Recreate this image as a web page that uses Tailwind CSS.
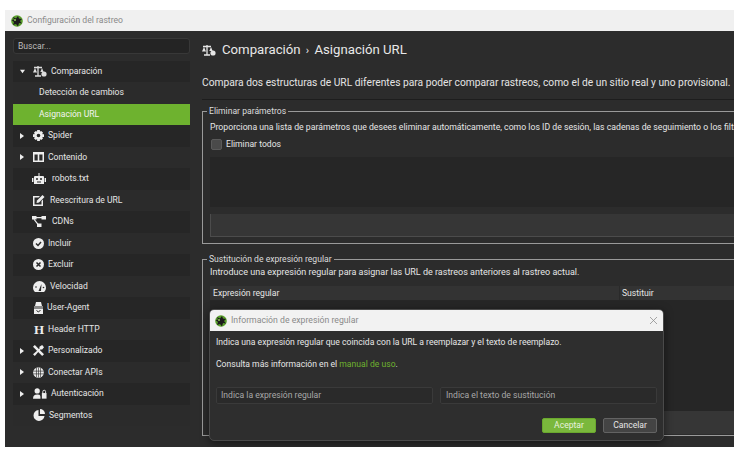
<!DOCTYPE html>
<html lang="es"><head><meta charset="utf-8">
<script src="https://cdn.jsdelivr.net/npm/@tailwindcss/browser@4"></script>
</head>
<body class="bg-white w-[741px] h-[457px] overflow-hidden font-['Roboto',sans-serif] relative">
<div class="absolute left-[5px] top-[10px] w-[729px] h-[437px] bg-[#2c2c2c] overflow-hidden flex flex-col">
  <div class="h-[21px] shrink-0 bg-[#f0f0f0] flex items-center pl-[6px] gap-[4px]">
    <svg width="12" height="12" viewBox="0 0 12 12"><circle cx="6" cy="6" r="5.8" fill="#5aa02c"/><path d="M2 2l3 1.500L7 1l1 2.500 3 .5-2 2 2 2.500-3-.5-1 3.500-2-2.500L2 10l1-3-2.500-2L3 4.500z" fill="#1c1c1c"/><circle cx="4" cy="5" r="1" fill="#8ecb55"/></svg>
    <span class="text-[8.6px] text-[#8a8a8a]">Configuración del rastreo</span>
  </div>
  <div class="flex flex-1 min-h-0">
    <aside class="w-[185px] shrink-0 pl-[8px] pt-[7px]">
      <div class="h-[16px] bg-[#242424] border border-[#383838] rounded-[3px] flex items-center pl-[4px] text-[8.6px] text-[#bdbdbd]">Buscar...</div>
      <ul class="mt-[6.500px] text-[8.6px] text-[#e6e6e6] bg-[#262626]">
        <li class="h-[21.5px] flex items-center bg-[#262626]"><svg class="ml-[7px] w-[5px] h-[5px]" viewBox="0 0 6 6"><path d="M0 1h6L3 5z" fill="#eee"/></svg><svg class="ml-[8px] w-[14px] h-[12px]" viewBox="0 0 14 12" fill="none" stroke="#ddd" stroke-width="1.300"><path d="M5 1v10M2 11h6M1 2.500h8"/><path d="M2 3 0 7.500h4zM9 3 7.300 7h3.400z" fill="#ddd" stroke="none"/><circle cx="11" cy="9" r="2.600" fill="#ddd" stroke="none"/></svg><span class="ml-[4px]">Comparación</span></li>
        <li class="h-[21.5px] flex items-center pl-[26px] bg-[#2b2b2b]">Detección de cambios</li>
        <li class="h-[21.5px] flex items-center pl-[26px] bg-[#6eb22f] text-[#f2f2f2]">Asignación URL</li>
        <li class="h-[21.5px] flex items-center bg-[#262626]"><svg class="ml-[7px] w-[4px] h-[6px]" viewBox="0 0 4 6"><path d="M0 0l4 3-4 3z" fill="#eee"/></svg><svg class="ml-[9px] w-[11px] h-[11px]" viewBox="0 0 12 12"><circle cx="6" cy="6" r="3.400" fill="none" stroke="#eee" stroke-width="2.800"/><path d="M4.500 0h3v2h-3zM4.500 10h3v2h-3zM0 4.500h2v3H0zM10 4.500h2v3h-2zM1 3l2-2 1.500 1.500-2 2zM11 3 9 1 7.500 2.500l2 2zM1 9l2 2 1.500-1.500-2-2zM11 9l-2 2-1.500-1.500 2-2z" fill="#eee"/></svg><span class="ml-[4px]">Spider</span></li>
        <li class="h-[21.5px] flex items-center bg-[#2b2b2b]"><svg class="ml-[7px] w-[4px] h-[6px]" viewBox="0 0 4 6"><path d="M0 0l4 3-4 3z" fill="#eee"/></svg><svg class="ml-[9px] w-[11px] h-[10px]" viewBox="0 0 11 10"><path d="M0 0h11v10H0z" fill="#eee"/><path d="M1.500 2.500h3.200v6H1.500zM6.300 2.500h3.200v6H6.300z" fill="#2b2b2b"/></svg><span class="ml-[4px]">Contenido</span></li>
        <li class="h-[21.5px] flex items-center bg-[#262626]"><svg class="ml-[19px] w-[14px] h-[11px]" viewBox="0 0 14 11"><path d="M3 3h8a1 1 0 011 1v7H2V4a1 1 0 011-1zM6.500 0h1v3h-1zM0 5h1.400v4H0zM12.600 5H14v4h-1.400z" fill="#eee"/><circle cx="5" cy="6" r="1" fill="#262626"/><circle cx="9" cy="6" r="1" fill="#262626"/><path d="M5 8.500h4v1H5z" fill="#262626"/></svg><span class="ml-[6px]">robots.txt</span></li>
        <li class="h-[21.5px] flex items-center bg-[#2b2b2b]"><svg class="ml-[19px] w-[13px] h-[12px]" viewBox="0 0 13 12"><path d="M1 2h7L6.500 3.500H2.500v7h7V7L11 5.500V12H1z" fill="#eee"/><path d="M5 6.500 10.500 1 12.500 3 7 8.500 4.500 9z" fill="#eee"/></svg><span class="ml-[5px]">Reescritura de URL</span></li>
        <li class="h-[21.5px] flex items-center bg-[#262626]"><svg class="ml-[19px] w-[14px] h-[11px]" viewBox="0 0 14 11" fill="#eee"><path d="M0 0h4.500v3.500H0zM9.500 0H14v3.500H9.500zM5 7.500h4.500V11H5z"/><path d="M4 1h6v1.200H4zM2.500 3 6.500 8 5.500 8.800 1.500 3.500z"/></svg><span class="ml-[6px]">CDNs</span></li>
        <li class="h-[21.5px] flex items-center bg-[#2b2b2b]"><svg class="ml-[20px] w-[11px] h-[11px]" viewBox="0 0 11 11"><circle cx="5.500" cy="5.500" r="5.500" fill="#eee"/><path d="M3 5.500 5 7.500 8 4" fill="none" stroke="#2b2b2b" stroke-width="1.500"/></svg><span class="ml-[4px]">Incluir</span></li>
        <li class="h-[21.5px] flex items-center bg-[#262626]"><svg class="ml-[20px] w-[11px] h-[11px]" viewBox="0 0 11 11"><circle cx="5.500" cy="5.500" r="5.500" fill="#eee"/><path d="M3.500 3.500l4 4M7.500 3.500l-4 4" fill="none" stroke="#262626" stroke-width="1.500"/></svg><span class="ml-[4px]">Excluir</span></li>
        <li class="h-[21.5px] flex items-center bg-[#2b2b2b]"><svg class="ml-[20px] w-[13px] h-[11px]" viewBox="0 0 13 11"><path d="M6.500 0A6.500 6.500 0 0 0 0 6.500C0 8.500 1 10 2 11h9c1-1 2-2.500 2-4.500A6.500 6.500 0 0 0 6.500 0z" fill="#eee"/><path d="M5.500 10 8.500 3 8 10z" fill="#2b2b2b"/><circle cx="3" cy="6" r=".8" fill="#2b2b2b"/><circle cx="10.500" cy="6.500" r=".8" fill="#2b2b2b"/></svg><span class="ml-[4px]">Velocidad</span></li>
        <li class="h-[21.5px] flex items-center bg-[#262626]"><svg class="ml-[20px] w-[11px] h-[12px]" viewBox="0 0 11 12"><path d="M3 0h5l1 4H2zM1 4.500h9v1H1zM1 6.500h9V12H1z" fill="#eee"/><path d="M3.500 8.500 5.500 10 7.500 8" fill="none" stroke="#262626"/></svg><span class="ml-[3px]">User-Agent</span></li>
        <li class="h-[21.5px] flex items-center bg-[#2b2b2b]"><span class="ml-[21px] w-[12px] font-['Liberation_Serif',serif] font-bold text-[13px] leading-none text-[#eee]">H</span><span class="ml-[2px]">Header HTTP</span></li>
        <li class="h-[21.5px] flex items-center bg-[#262626]"><svg class="ml-[7px] w-[4px] h-[6px]" viewBox="0 0 4 6"><path d="M0 0l4 3-4 3z" fill="#eee"/></svg><svg class="ml-[9px] w-[11px] h-[11px]" viewBox="0 0 12 12"><path d="M0 2 2 0l10 10-2 2z" fill="#eee"/><path d="M12 2.500 10 0 7 2v2L0 10l2 2 6-7h2z" fill="#eee"/></svg><span class="ml-[4px]">Personalizado</span></li>
        <li class="h-[21.5px] flex items-center bg-[#2b2b2b]"><svg class="ml-[7px] w-[4px] h-[6px]" viewBox="0 0 4 6"><path d="M0 0l4 3-4 3z" fill="#eee"/></svg><svg class="ml-[9px] w-[11px] h-[11px]" viewBox="0 0 12 12"><circle cx="6" cy="6" r="5.800" fill="#eee"/><path d="M6 .5v11M.5 4.500h11M.5 7.500h11M3.800 1v10M8.200 1v10" stroke="#2b2b2b" stroke-width=".7"/></svg><span class="ml-[4px]">Conectar APIs</span></li>
        <li class="h-[21.5px] flex items-center bg-[#262626]"><svg class="ml-[7px] w-[4px] h-[6px]" viewBox="0 0 4 6"><path d="M0 0l4 3-4 3z" fill="#eee"/></svg><svg class="ml-[9px] w-[14px] h-[11px]" viewBox="0 0 15 11" fill="#eee"><circle cx="4.500" cy="2.800" r="2.800"/><path d="M0 11c0-3 1.500-4.500 4.500-4.500S8 7 8 11z"/><path d="M9.500 5h5v6h-5z"/><path d="M10.500 5V3.500a1.500 1.500 0 013 0V5" fill="none" stroke="#eee"/></svg><span class="ml-[4px]">Autenticación</span></li>
        <li class="h-[21.5px] flex items-center bg-[#2b2b2b]"><svg class="ml-[20px] w-[12px] h-[12px]" viewBox="0 0 12 12"><path d="M5.500 1v6h6A5.500 5.500 0 1 1 5.500 1z" fill="#eee"/><path d="M7 0a5 5 0 015 5H7z" fill="#eee"/></svg><span class="ml-[4px]">Segmentos</span></li>
      </ul>
    </aside>
    <main class="flex-1 min-w-0 pl-[12px] text-[#ededed] overflow-hidden">
      <div class="h-[38px] flex items-center gap-[6px] text-[13.2px] text-[#e8e8e8] whitespace-nowrap">
        <svg class="w-[14px] h-[12px]" viewBox="0 0 14 12" fill="none" stroke="#e6e6e6" stroke-width="1.300"><path d="M5 1v10M2 11h6M1 2.500h8"/><path d="M2 3 0 7.500h4zM9 3 7.300 7h3.400z" fill="#e6e6e6" stroke="none"/><circle cx="11" cy="9" r="2.600" fill="#e6e6e6" stroke="none"/></svg>
        <span>Comparación <span class="text-[11px] mx-[2px]">›</span> Asignación URL</span>
      </div>
      <p class="mt-[6px] text-[10.25px] leading-[16px] whitespace-nowrap text-[#e4e4e4]">Compara dos estructuras de URL diferentes para poder comparar rastreos, como el de un sitio real y uno provisional.</p>
      <div class="mt-[8px] h-px bg-[#1d1d1d]"></div>

      <section class="relative mt-[11px] h-[133px] border-l border-t border-b border-[#9a9a9a] pl-[7px] pt-[9px] w-[540px]">
        <span class="absolute -top-[6px] left-[4px] bg-[#2c2c2c] px-[2px] text-[8.6px] leading-[11px] text-[#dcdcdc]">Eliminar parámetros</span>
        <p class="text-[8.7px] leading-[12px] whitespace-nowrap text-[#e6e6e6]">Proporciona una lista de parámetros que desees eliminar automáticamente, como los ID de sesión, las cadenas de seguimiento o los filtros.</p>
        <label class="mt-[5px] flex items-center gap-[4px] text-[8.6px] text-[#e6e6e6]"><span class="ml-px w-[11px] h-[11px] rounded-[2px] bg-[#4a4a4a] border border-[#5a5a5a]"></span>Eliminar todos</label>
        <div class="mt-[6px] h-[50px] bg-[#262626]"></div>
        <div class="mt-[7px] h-[23px] bg-[#363636] border-l border-b border-[#4c4c4c]"></div>
      </section>

      <section class="relative mt-[15px] h-[177px] border-l border-t border-b border-[#9a9a9a] pl-[7px] pt-[6px] w-[540px]">
        <span class="absolute -top-[6px] left-[4px] bg-[#2c2c2c] px-[2px] text-[8.6px] leading-[11px] text-[#dcdcdc]">Sustitución de expresión regular</span>
        <p class="text-[9px] leading-[12px] whitespace-nowrap text-[#e6e6e6]">Introduce una expresión regular para asignar las URL de rastreos anteriores al rastreo actual.</p>
        <div class="mt-[8px] h-[14px] bg-[#333333] grid grid-cols-[409px_1fr] text-[8.6px] leading-[14px] text-[#e6e6e6]"><span class="pl-[3px]">Expresión regular</span><span class="pl-[2px] border-l border-[#2a2a2a]">Sustituir</span></div>
        <div class="h-[111px] bg-[#262626]"></div>
        <div class="h-[23px] bg-[#363636]"></div>
      </section>
    </main>
  </div>
  <div class="absolute left-[204px] top-[299px] w-[455px] h-[132px] rounded-[5px] bg-[#2e2e2e] border border-[#4a4a4a] shadow-[0_2px_8px_rgba(0,0,0,0.5)] overflow-hidden flex flex-col">
    <div class="h-[21px] shrink-0 bg-[#f2f2f2] flex items-center pl-[5px] pr-[5px] gap-[4px]">
      <svg width="12" height="12" viewBox="0 0 12 12"><circle cx="6" cy="6" r="5.800" fill="#5aa02c"/><path d="M2 2l3 1.500L7 1l1 2.500 3 .5-2 2 2 2.500-3-.5-1 3.500-2-2.500L2 10l1-3-2.500-2L3 4.500z" fill="#1c1c1c"/><circle cx="4" cy="5" r="1" fill="#8ecb55"/></svg>
      <span class="text-[8.7px] text-[#8a8a8a] flex-1">Información de expresión regular</span>
      <svg class="w-[9px] h-[9px]" viewBox="0 0 9 9" stroke="#8f8f8f" stroke-width=".8"><path d="M1 1l7 7M8 1 1 8"/></svg>
    </div>
    <div class="px-[6px] flex-1 flex flex-col text-[8.6px] text-[#e6e6e6]">
      <p class="mt-[5px] leading-[12px]">Indica una expresión regular que coincida con la URL a reemplazar y el texto de reemplazo.</p>
      <p class="mt-[10px] leading-[12px]">Consulta más información en el <span class="text-[#6eb22f]">manual de uso</span>.</p>
      <div class="mt-[17px] grid grid-cols-2 gap-[7px]">
        <div class="h-[17px] rounded-[2px] bg-[#2a2a2a] border border-[#3a3a3a] pl-[4px] leading-[15px] text-[#a8a8a8]">Indica la expresión regular</div>
        <div class="h-[17px] rounded-[2px] bg-[#2a2a2a] border border-[#3a3a3a] pl-[5px] leading-[15px] text-[#a8a8a8]">Indica el texto de sustitución</div>
      </div>
      <div class="mt-[14px] flex justify-end gap-[7px]">
        <button class="w-[54px] h-[15px] rounded-[2px] bg-[#7ab83c] text-[8.6px] leading-[13px] text-[#e8f2dc] border border-[#6aa82e]">Aceptar</button>
        <button class="w-[54px] h-[15px] rounded-[2px] bg-[#444444] text-[8.6px] leading-[13px] text-[#e6e6e6] border border-[#636363]">Cancelar</button>
      </div>
    </div>
  </div>
</div>
</body></html>
